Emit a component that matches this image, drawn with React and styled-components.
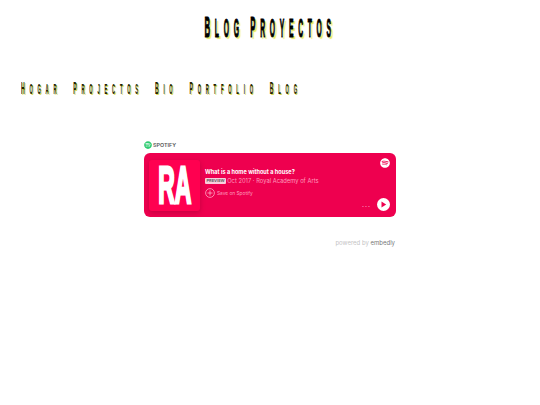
import React from "react";
import styled, { createGlobalStyle } from "styled-components";
import { FaSpotify } from "react-icons/fa";

const Global = createGlobalStyle`
  html, body {
    margin: 0;
    padding: 0;
    background: #fff;
    font-family: "Liberation Sans", Arial, sans-serif;
  }
`;

const Page = styled.div`
  width: 540px;
  height: 405px;
  overflow: hidden;
  display: flex;
  flex-direction: column;
`;

const TitleRow = styled.div`
  height: 54px;
  display: flex;
  align-items: center;
  justify-content: center;
`;

const Title = styled.h1`
  margin: 0;
  white-space: nowrap;
  font-size: 25px;
  font-weight: 700;
  text-transform: uppercase;
  letter-spacing: 17.5px;
  color: #000;
  -webkit-text-stroke: 1px #000;
  text-shadow: 6px 2px 2px #e8e860;
  transform: scaleX(0.27);
`;

const Initial = styled.span`
  font-size: 29px;
`;

const Nav = styled.nav`
  margin-top: 23px;
  height: 24px;
  padding-left: 21px;
  display: flex;
  align-items: center;
`;

const NavList = styled.div`
  display: flex;
  gap: 40px;
  transform: scaleX(0.3);
  transform-origin: left center;
  white-space: nowrap;
`;

const NavLink = styled.a`
  font-size: 14px;
  font-weight: 700;
  text-transform: uppercase;
  letter-spacing: 16px;
  color: #222200;
  text-shadow: 4px 1px 1px #d8d850;
  &::first-letter {
    font-size: 17px;
  }
`;

const Embed = styled.section`
  width: 252px;
  margin: 38px 0 0 144px;
`;

const Provider = styled.div`
  height: 12px;
  display: flex;
  align-items: center;
  gap: 1px;
  font-size: 5.4px;
  font-weight: 600;
  color: #555;
  font-family: Inter, sans-serif;
`;

const ProviderDot = styled.span`
  width: 8px;
  height: 8px;
  border-radius: 50%;
  background: #fff;
  color: #2ecc71;
  display: flex;
  svg {
    width: 8px;
    height: 8px;
  }
`;

const Card = styled.div`
  margin-top: 2px;
  height: 64px;
  border-radius: 6px;
  background: #ee004f;
  padding: 7px 6px 6px 5px;
  box-sizing: border-box;
  display: flex;
  color: #fff;
  font-family: Inter, sans-serif;
`;

const Cover = styled.div`
  width: 51px;
  height: 51px;
  border-radius: 3px;
  background: #ff0050;
  box-shadow: 0 2px 5px rgba(120, 0, 40, 0.35);
  display: flex;
  align-items: center;
  justify-content: center;
  flex: none;
`;

const CoverText = styled.span`
  font-family: "Liberation Sans", Arial, sans-serif;
  font-size: 51px;
  font-weight: 700;
  line-height: 1;
  -webkit-text-stroke: 3px #fff;
  transform: scaleX(0.45);
  color: #fff;
`;

const Info = styled.div`
  margin-left: 5px;
  padding-top: 8px;
  flex: 1;
  display: flex;
  flex-direction: column;
`;

const TrackTitle = styled.div`
  font-size: 5.6px;
  line-height: 8px;
  font-weight: 700;
  white-space: nowrap;
`;

const Meta = styled.div`
  margin-top: 1px;
  display: flex;
  align-items: center;
  gap: 1px;
  font-size: 5.8px;
  color: #ff9dbd;
  white-space: nowrap;
`;

const Badge = styled.span`
  background: #f9cfdc;
  color: #555;
  font-size: 4px;
  font-weight: 600;
  line-height: 6px;
  padding: 0 1.5px;
  border-radius: 1px;
`;

const SaveRow = styled.div`
  margin-top: 4px;
  display: flex;
  align-items: center;
  gap: 2px;
  font-size: 4.8px;
  color: #ff9dbd;
`;

const Side = styled.div`
  width: 40px;
  display: flex;
  flex-direction: column;
  align-items: flex-end;
  justify-content: space-between;
  flex: none;
`;

const SpotifyMark = styled.span`
  display: flex;
  margin-top: -2px;
  margin-right: 0;
  color: #fff;
  svg {
    width: 10px;
    height: 10px;
  }
`;

const Controls = styled.div`
  display: flex;
  align-items: center;
  gap: 6px;
`;

const Dots = styled.span`
  font-size: 7px;
  letter-spacing: 1px;
  line-height: 7px;
  color: #ffb3cc;
`;

const PlayButton = styled.span`
  width: 13px;
  height: 13px;
  border-radius: 50%;
  background: #fff;
  display: flex;
  align-items: center;
  justify-content: center;
`;

const Powered = styled.div`
  margin: 22px 1px 0 0;
  text-align: right;
  font-size: 6px;
  line-height: 8px;
  color: #c4c4c4;
  font-family: Inter, sans-serif;
`;

const Brand = styled.span`
  color: #777;
`;

export default function App() {
  return (
    <Page>
      <Global />
      <TitleRow>
        <Title>
          <Initial>B</Initial>log <Initial>P</Initial>royectos
        </Title>
      </TitleRow>
      <Nav>
        <NavList>
          <NavLink>Hogar</NavLink>
          <NavLink>Projectos</NavLink>
          <NavLink>Bio</NavLink>
          <NavLink>Portfolio</NavLink>
          <NavLink>Blog</NavLink>
        </NavList>
      </Nav>
      <Embed>
        <Provider>
          <ProviderDot>
            <FaSpotify />
          </ProviderDot>
          SPOTIFY
        </Provider>
        <Card>
          <Cover>
            <CoverText>RA</CoverText>
          </Cover>
          <Info>
            <TrackTitle>What is a home without a house?</TrackTitle>
            <Meta>
              <Badge>PREVIEW</Badge>
              Oct 2017 · Royal Academy of Arts
            </Meta>
            <SaveRow>
              <svg width="10" height="10" viewBox="0 0 10 10" fill="none" stroke="#ffc2d6" strokeWidth="0.7">
                <circle cx="5" cy="5" r="4.4" />
                <path d="M5 2.5v5M2.5 5h5" />
              </svg>
              Save on Spotify
            </SaveRow>
          </Info>
          <Side>
            <SpotifyMark>
              <FaSpotify />
            </SpotifyMark>
            <Controls>
              <Dots>...</Dots>
              <PlayButton>
                <svg width="7" height="7" viewBox="0 0 7 7">
                  <path d="M1.5 0.6L6.2 3.5L1.5 6.4Z" fill="#ee004f" />
                </svg>
              </PlayButton>
            </Controls>
          </Side>
        </Card>
        <Powered>
          powered by <Brand>embedly</Brand>
        </Powered>
      </Embed>
    </Page>
  );
}
